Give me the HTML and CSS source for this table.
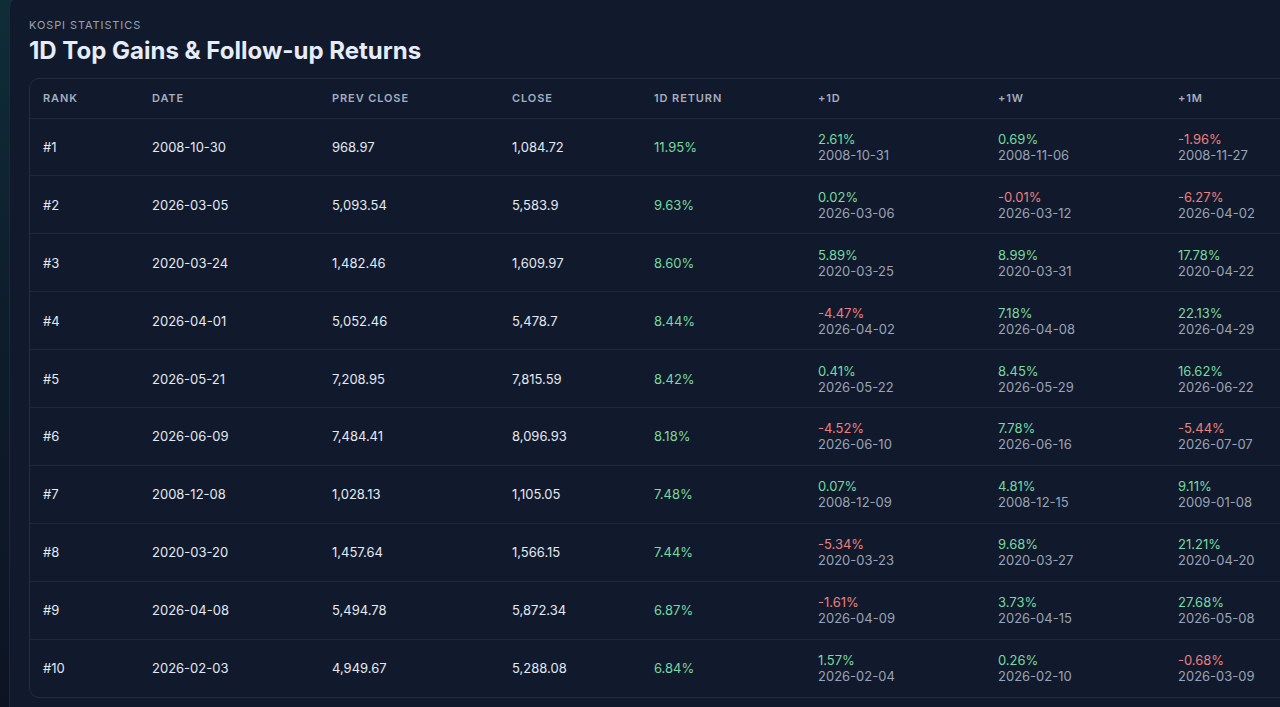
FILE: index.html
```html
<!DOCTYPE html>
<html lang="en">
<head>
<meta charset="utf-8">
<title>KOSPI Statistics</title>
<link rel="stylesheet" href="styles.css">
</head>
<body>
<div class="page">
  <section class="card">
    <div class="kicker">KOSPI STATISTICS</div>
    <h1 class="title">1D Top Gains &amp; Follow-up Returns</h1>
    <div class="table-wrap">
      <table class="stats">
        <colgroup>
          <col class="c-rank"><col class="c-date"><col class="c-prev"><col class="c-close"><col class="c-ret"><col class="c-f"><col class="c-f"><col class="c-f">
        </colgroup>
        <thead>
          <tr><th>Rank</th><th>Date</th><th>Prev Close</th><th>Close</th><th>1D Return</th><th>+1D</th><th>+1W</th><th>+1M</th></tr>
        </thead>
        <tbody>
          <tr><td>#1</td><td>2008-10-30</td><td>968.97</td><td>1,084.72</td><td class="up">11.95%</td>
            <td><span class="up">2.61%</span><span class="sub">2008-10-31</span></td>
            <td><span class="up">0.69%</span><span class="sub">2008-11-06</span></td>
            <td><span class="down">-1.96%</span><span class="sub">2008-11-27</span></td></tr>
          <tr><td>#2</td><td>2026-03-05</td><td>5,093.54</td><td>5,583.9</td><td class="up">9.63%</td>
            <td><span class="up">0.02%</span><span class="sub">2026-03-06</span></td>
            <td><span class="down">-0.01%</span><span class="sub">2026-03-12</span></td>
            <td><span class="down">-6.27%</span><span class="sub">2026-04-02</span></td></tr>
          <tr><td>#3</td><td>2020-03-24</td><td>1,482.46</td><td>1,609.97</td><td class="up">8.60%</td>
            <td><span class="up">5.89%</span><span class="sub">2020-03-25</span></td>
            <td><span class="up">8.99%</span><span class="sub">2020-03-31</span></td>
            <td><span class="up">17.78%</span><span class="sub">2020-04-22</span></td></tr>
          <tr><td>#4</td><td>2026-04-01</td><td>5,052.46</td><td>5,478.7</td><td class="up">8.44%</td>
            <td><span class="down">-4.47%</span><span class="sub">2026-04-02</span></td>
            <td><span class="up">7.18%</span><span class="sub">2026-04-08</span></td>
            <td><span class="up">22.13%</span><span class="sub">2026-04-29</span></td></tr>
          <tr><td>#5</td><td>2026-05-21</td><td>7,208.95</td><td>7,815.59</td><td class="up">8.42%</td>
            <td><span class="up">0.41%</span><span class="sub">2026-05-22</span></td>
            <td><span class="up">8.45%</span><span class="sub">2026-05-29</span></td>
            <td><span class="up">16.62%</span><span class="sub">2026-06-22</span></td></tr>
          <tr><td>#6</td><td>2026-06-09</td><td>7,484.41</td><td>8,096.93</td><td class="up">8.18%</td>
            <td><span class="down">-4.52%</span><span class="sub">2026-06-10</span></td>
            <td><span class="up">7.78%</span><span class="sub">2026-06-16</span></td>
            <td><span class="down">-5.44%</span><span class="sub">2026-07-07</span></td></tr>
          <tr><td>#7</td><td>2008-12-08</td><td>1,028.13</td><td>1,105.05</td><td class="up">7.48%</td>
            <td><span class="up">0.07%</span><span class="sub">2008-12-09</span></td>
            <td><span class="up">4.81%</span><span class="sub">2008-12-15</span></td>
            <td><span class="up">9.11%</span><span class="sub">2009-01-08</span></td></tr>
          <tr><td>#8</td><td>2020-03-20</td><td>1,457.64</td><td>1,566.15</td><td class="up">7.44%</td>
            <td><span class="down">-5.34%</span><span class="sub">2020-03-23</span></td>
            <td><span class="up">9.68%</span><span class="sub">2020-03-27</span></td>
            <td><span class="up">21.21%</span><span class="sub">2020-04-20</span></td></tr>
          <tr><td>#9</td><td>2026-04-08</td><td>5,494.78</td><td>5,872.34</td><td class="up">6.87%</td>
            <td><span class="down">-1.61%</span><span class="sub">2026-04-09</span></td>
            <td><span class="up">3.73%</span><span class="sub">2026-04-15</span></td>
            <td><span class="up">27.68%</span><span class="sub">2026-05-08</span></td></tr>
          <tr><td>#10</td><td>2026-02-03</td><td>4,949.67</td><td>5,288.08</td><td class="up">6.84%</td>
            <td><span class="up">1.57%</span><span class="sub">2026-02-04</span></td>
            <td><span class="up">0.26%</span><span class="sub">2026-02-10</span></td>
            <td><span class="down">-0.68%</span><span class="sub">2026-03-09</span></td></tr>
        </tbody>
      </table>
    </div>
  </section>
</div>
</body>
</html>
```

FILE: styles.css
```css
* { box-sizing: border-box; }
html, body {
  margin: 0;
  padding: 0;
  height: 100%;
  overflow: hidden;
}
body {
  background: linear-gradient(180deg, #0f2d38 0%, #0e1c2c 45%, #0c1424 100%);
  font-family: Inter, "Noto Sans", sans-serif;
  color: #e2e8f0;
}
.page {
  padding: 0 0 0 9px;
  width: 1400px;
}
.card {
  margin-top: -6px;
  background: #111a2c;
  border: 1px solid #1d2839;
  border-radius: 14px;
  padding: 23px 0 10px 19px;
  width: 1400px;
  height: 730px;
}
.kicker {
  font-size: 11px;
  letter-spacing: 0.9px;
  color: #98a2b6;
  line-height: 14px;
}
.title {
  margin: 4px 0 12px;
  font-size: 24px;
  line-height: 30px;
  font-weight: 700;
  color: #e6ecf8;
  letter-spacing: 0;
}
.table-wrap {
  border: 1px solid #222d40;
  border-radius: 10px;
  overflow: hidden;
  width: 1380px;
}
.stats {
  border-collapse: collapse;
  table-layout: fixed;
  width: 1313px;
}
.c-rank { width: 109px; }
.c-date { width: 180px; }
.c-prev { width: 180px; }
.c-close { width: 142px; }
.c-ret { width: 164px; }
.c-f { width: 180px; }
.stats th {
  text-align: left;
  font-size: 11px;
  font-weight: 600;
  letter-spacing: 0.9px;
  text-transform: uppercase;
  color: #a4adbf;
  height: 39px;
  padding: 0 0 0 13px;
  border-bottom: 1px solid #1e2839;
}
.stats td {
  font-size: 13px;
  line-height: 16px;
  height: 57.9px;
  padding: 0 0 0 13px;
  color: #e4e9f2;
  border-bottom: 1px solid #1e2839;
  vertical-align: middle;
}
.stats tbody tr:last-child td { border-bottom: none; }
.stats td span { display: block; }
.up { color: #78d9a2 !important; }
.down { color: #ea8080 !important; }
.sub { color: #9aa3b5; }
```
